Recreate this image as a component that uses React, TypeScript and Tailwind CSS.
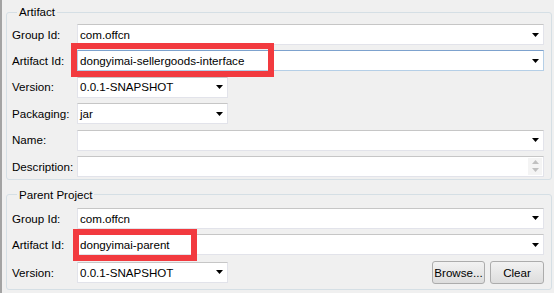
import React from "react";

const Arrow = ({ light }: { light?: boolean }) => (
  <svg width="7" height="4" viewBox="0 0 7 4" className="shrink-0">
    <path d="M0 0H7L3.5 4Z" fill={light ? "#c0c0c0" : "#000"} />
  </svg>
);

type FieldProps = {
  value?: string;
  combo?: boolean;
  short?: boolean;
  focused?: boolean;
  spinner?: boolean;
};

const Field: React.FC<FieldProps> = ({ value, combo, short, focused, spinner }) => {
  const border = focused
    ? "border-[#b5cfe7] border-t-[#7da2ce]"
    : "border-[#e2e3ea] border-t-[#c6c6c6]";
  return (
    <div
      className={`flex h-[21px] items-center bg-white border ${border} ${
        short ? "w-[151px]" : "flex-1"
      }`}
    >
      <span className="flex-1 pl-[2px] text-[11.6px] leading-none text-black whitespace-nowrap">
        {value}
      </span>
      {combo && (
        <span className="pr-[4px] flex items-center">
          <Arrow />
        </span>
      )}
      {spinner && (
        <span className="mr-[1px] flex h-[17px] w-[14px] flex-col items-center justify-center gap-[4px] bg-[#f4f4f4]">
          <svg width="7" height="4" viewBox="0 0 7 4">
            <path d="M0 4H7L3.5 0Z" fill="#c0c0c0" />
          </svg>
          <Arrow light />
        </span>
      )}
    </div>
  );
};

const Row: React.FC<{ label: string; children: React.ReactNode }> = ({ label, children }) => (
  <div className="flex items-center">
    <div className="w-[65px] text-[11.6px] leading-none text-black whitespace-nowrap">{label}</div>
    {children}
  </div>
);

const Button: React.FC<{ label: string; w: string }> = ({ label, w }) => (
  <button
    className={`${w} h-[23px] rounded-[3px] border border-[#acacac] bg-gradient-to-b from-[#f2f2f2] to-[#dddddd] text-[11.6px] leading-none text-black`}
  >
    {label}
  </button>
);

export default function App() {
  return (
    <div
      className="relative w-[554px] h-[293px] overflow-hidden bg-[#f0f0f0] border-l-2 border-[#a3a3a3] pt-[4px] pl-[4px] pr-[2px]"
      style={{ fontFamily: '"Liberation Sans", Arial, sans-serif' }}
    >
      <fieldset className="rounded-[3px] border border-[#d5dfe5] pl-[5px] pr-[7px] pt-[4px] pb-[2px]">
        <legend className="ml-[5px] px-[2px] text-[11.6px] leading-[16px] text-black">Artifact</legend>
        <div className="flex flex-col gap-[5.4px]">
          <Row label="Group Id:">
            <Field value="com.offcn" combo />
          </Row>
          <Row label="Artifact Id:">
            <Field value="dongyimai-sellergoods-interface" combo focused />
          </Row>
          <Row label="Version:">
            <Field value="0.0.1-SNAPSHOT" combo short />
          </Row>
          <Row label="Packaging:">
            <Field value="jar" combo short />
          </Row>
          <Row label="Name:">
            <Field combo />
          </Row>
          <Row label="Description:">
            <Field spinner />
          </Row>
        </div>
      </fieldset>

      <fieldset className="mt-[7px] rounded-[3px] border border-[#d5dfe5] pl-[5px] pr-[7px] pt-[5px] pb-[5px]">
        <legend className="ml-[5px] px-[2px] text-[11.6px] leading-[16px] text-black">Parent Project</legend>
        <div className="flex flex-col gap-[5.5px]">
          <Row label="Group Id:">
            <Field value="com.offcn" combo />
          </Row>
          <Row label="Artifact Id:">
            <Field value="dongyimai-parent" combo />
          </Row>
          <Row label="Version:">
            <Field value="0.0.1-SNAPSHOT" combo short />
            <div className="flex-1" />
            <div className="flex gap-[5px]">
              <Button label="Browse..." w="w-[53px]" />
              <Button label="Clear" w="w-[54px]" />
            </div>
          </Row>
        </div>
      </fieldset>

      {/* red annotation boxes */}
      <div className="pointer-events-none absolute left-[69px] top-[43px] h-[34px] w-[203px] border-6 border-[#f23a3f]" />
      <div className="pointer-events-none absolute left-[71px] top-[229px] h-[32px] w-[124px] border-6 border-[#f23a3f]" />
    </div>
  );
}
